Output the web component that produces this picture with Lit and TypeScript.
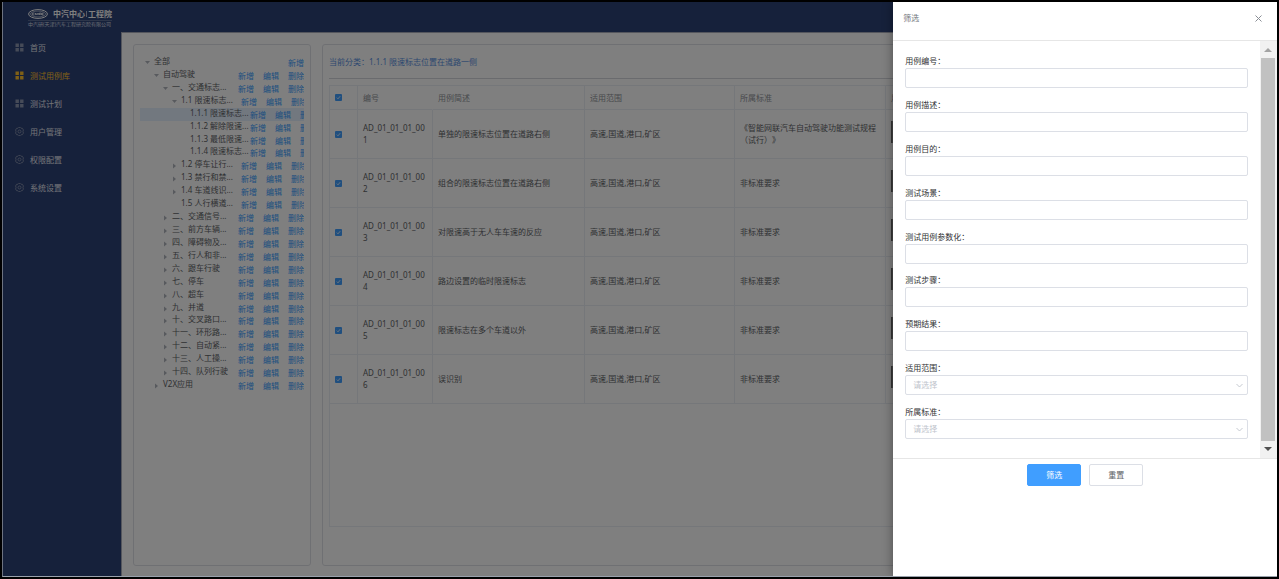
import { LitElement, html, svg, css } from "lit";
import { customElement } from "lit/decorators.js";
import { classMap } from "lit/directives/class-map.js";

type TreeNode = { label: string; depth: number; state: "open" | "closed" | "leaf" };

const n = (depth: number, label: string, state: TreeNode["state"] = "closed"): TreeNode => ({ label, depth, state });

const TREE: TreeNode[] = [
  n(0, "全部", "open"),
  n(1, "自动驾驶", "open"),
  n(2, "一、交通标志...", "open"),
  n(3, "1.1 限速标志...", "open"),
  n(4, "1.1.1 限速标志...", "leaf"),
  n(4, "1.1.2 解除限速...", "leaf"),
  n(4, "1.1.3 最低限速...", "leaf"),
  n(4, "1.1.4 限速标志...", "leaf"),
  n(3, "1.2 停车让行..."),
  n(3, "1.3 禁行和禁..."),
  n(3, "1.4 车道线识..."),
  n(3, "1.5 人行横道...", "leaf"),
  n(2, "二、交通信号..."),
  n(2, "三、前方车辆..."),
  n(2, "四、障碍物及..."),
  n(2, "五、行人和非..."),
  n(2, "六、跟车行驶"),
  n(2, "七、停车"),
  n(2, "八、超车"),
  n(2, "九、并道"),
  n(2, "十、交叉路口..."),
  n(2, "十一、环形路..."),
  n(2, "十二、自动紧..."),
  n(2, "十三、人工操..."),
  n(2, "十四、队列行驶"),
  n(1, "V2X应用"),
];

const CASES = [
  ["AD_01_01_01_001", "单独的限速标志位置在道路右侧", "《智能网联汽车自动驾驶功能测试规程（试行）》"],
  ["AD_01_01_01_002", "组合的限速标志位置在道路右侧", "非标准要求"],
  ["AD_01_01_01_003", "对限速高于无人车车速的反应", "非标准要求"],
  ["AD_01_01_01_004", "路边设置的临时限速标志", "非标准要求"],
  ["AD_01_01_01_005", "限速标志在多个车道以外", "非标准要求"],
  ["AD_01_01_01_006", "误识别", "非标准要求"],
];

const base = css`
  * { box-sizing: border-box; }
  :host {
    box-sizing: border-box;
    font-family: "Noto Sans", "Noto Sans CJK SC", sans-serif;
    font-size: 8px;
    line-height: 12px;
    text-spacing-trim: space-all;
  }
  a { text-decoration: none; }
`;

@customElement("side-menu")
class SideMenu extends LitElement {
  static styles = [base, css`
    :host { display: block; background: #2c4276; padding-top: 2px; }
    .item { display: flex; align-items: center; height: 28px; padding-left: 12px; gap: 6px; color: #e4e7ef; }
    .item svg { width: 9px; height: 9px; color: #8d97b0; margin-bottom: 2px; }
    .active, .active svg { color: #ffc02c; }
  `];

  grid = svg`<path fill="currentColor" d="M0.5 0.5h3.4v3.4h-3.4zM5.1 0.5h3.4v3.4h-3.4zM0.5 5.1h3.4v3.4h-3.4zM5.1 5.1h3.4v3.4h-3.4z"/>`;
  gear = svg`<g fill="none" stroke="currentColor" stroke-width=".8"><path d="M3 1.2 3.6.5h1.8L6 1.2l1.5.2.9 1.6-.4 1.5.4 1.5-.9 1.6L6 7.8l-.6.7H3.6L3 7.8l-1.5-.2L.6 6 1 4.500.6 3l.9-1.600z"/><circle cx="4.500" cy="4.500" r="1.500"/></g>`;

  render() {
    const items: [string, unknown][] = [
      ["首页", this.grid], ["测试用例库", this.grid], ["测试计划", this.grid],
      ["用户管理", this.gear], ["权限配置", this.gear], ["系统设置", this.gear],
    ];
    return html`<nav>${items.map(([text, icon], i) => html`
      <a href="#" class=${classMap({ item: true, active: i === 1 })}>
        <svg viewBox="0 0 9 9" aria-hidden="true">${icon}</svg><span>${text}</span>
      </a>`)}</nav>`;
  }
}

@customElement("case-tree")
class CaseTree extends LitElement {
  static styles = [base, css`
    :host { display: grid; grid-auto-rows: 1fr; height: 347px; padding-top: 11px; overflow: hidden; }
    .row { display: flex; min-width: 0; min-height: 0; height: 100%; color: #606266; }
    .current { background: #e4f0ff; }
    .arrow { flex: none; width: 5px; height: 13px; margin: 0 4px 0 5px; color: #b0b4bd; }
    .d1 { padding-left: 9px; }
    .d2 { padding-left: 18px; }
    .d3 { padding-left: 27px; }
    .d4 { padding-left: 36px; }
    .label { flex: none; min-width: 60px; height: 10px; line-height: 10px; white-space: nowrap; }
    .ops { flex: none; display: flex; gap: 9px; height: 12px; margin-left: auto; line-height: 13px; }
    .ops a { color: #409eff; }
  `];

  render() {
    return TREE.map((t, i) => html`
      <div class=${classMap({ row: true, current: i === 4, [`d${t.depth}`]: true })}>
        <svg class="arrow" viewBox="0 0 5 13" aria-hidden="true">
          ${t.state === "open" ? svg`<path fill="currentColor" d="M0 5h5L2.500 8z"/>`
            : t.state === "closed" ? svg`<path fill="currentColor" d="M1 4.500 4 7 1 9.500z"/>` : ""}
        </svg>
        <span class="label">${t.label}</span>
        <span class="ops">
          <a href="#">新增</a>
          ${t.depth > 0 ? html`<a href="#">编辑</a><a href="#">删除</a>` : ""}
        </span>
      </div>`);
  }
}

@customElement("case-table")
class CaseTable extends LitElement {
  static styles = [base, css`
    :host { display: block; overflow: hidden; border: 1px solid #ebeef5; }
    table { width: 100%; table-layout: fixed; border-collapse: separate; border-spacing: 0; color: #606266; }
    th, td {
      padding: 0 5px; text-align: left; vertical-align: middle; font-weight: 400; word-break: break-all;
      border-right: 1px solid #ebeef5; border-bottom: 1px solid #ebeef5;
    }
    th { height: 24px; color: #909399; }
    td { height: 49px; }
    .open { border-right-color: transparent; }
    .c0 { width: 28px; } .c1 { width: 75px; } .c2 { width: 152px; }
    .c3 { width: 150px; } .c4 { width: 151px; }
    input {
      appearance: none; display: block; width: 7px; height: 7px; margin: 0; border-radius: 1px;
      background: #409eff url("data:image/svg+xml,%3Csvg xmlns='http://www.w3.org/2000/svg' viewBox='0 0 7 7'%3E%3Cpath d='M1.8 3.600 3 4.800 5.200 2.200' fill='none' stroke='white' stroke-width='.8'/%3E%3C/svg%3E");
    }
    .thumb { display: block; width: 40px; height: 22px; margin-bottom: 4px; background: #8a8a8a; border-left: 1px solid #6b6b6b; }
  `];

  render() {
    return html`<table>
      <thead><tr>
        <th class="c0"><input type="checkbox" checked aria-label="全选"></th>
        <th class="c1 open">编号</th><th class="c2">用例简述</th><th class="c3">适用范围</th>
        <th class="c4">所属标准</th><th>用例图</th>
      </tr></thead>
      <tbody>${CASES.map(([id, text, standard]) => html`<tr>
        <td><input type="checkbox" checked aria-label=${id}></td>
        <td>${id}</td><td>${text}</td><td>高速,国道,港口,矿区</td><td>${standard}</td>
        <td><span class="thumb"></span></td>
      </tr>`)}</tbody>
    </table>`;
  }
}

@customElement("filter-drawer")
class FilterDrawer extends LitElement {
  static styles = [base, css`
    :host { display: flex; flex-direction: column; background: #fff; color: #303133; box-shadow: 0 0 10px rgba(0, 0, 0, .4); }
    header { display: flex; justify-content: space-between; align-items: center; height: 39px; padding: 0 14px 6px 10px; color: #72767b; border-bottom: 1px solid #e6e6e6; }
    h2 { margin: 0; font-size: 8px; font-weight: 400; }
    .close { display: block; width: 9px; height: 9px; padding: 0; border: 0; background: none; color: #8a8e95; }
    .close svg { display: block; }
    .body { display: flex; height: 418px; border-bottom: 1px solid #e6e6e6; }
    form { flex: 1; display: flex; flex-direction: column; justify-content: space-between; padding: 13px 12px 19px 12px; }
    label { display: block; height: 14px; line-height: 14px; }
    input, select {
      display: block; width: 100%; height: 20px; padding: 0 8px; font: inherit; color: #c0c4cc;
      background: #fff; border: 1px solid #dcdfe6; border-radius: 2px; outline: none;
    }
    select {
      appearance: none; padding: 0 7px;
      background: #fff url("data:image/svg+xml,%3Csvg xmlns='http://www.w3.org/2000/svg' width='7' height='5' viewBox='0 0 7 5'%3E%3Cpath d='M.5 1 3.500 4 6.500 1' fill='none' stroke='%23c0c4cc' stroke-width='.9'/%3E%3C/svg%3E") no-repeat right 4px center;
    }
    .scroll { display: flex; flex-direction: column; width: 17px; padding: 0 2px 0 1px; background: #f1f1f1; }
    .scroll svg { flex: none; display: block; width: 14px; height: 17px; }
    .thumb { flex: 1; background: #c1c1c1; }
    footer { display: flex; justify-content: center; gap: 8px; padding-top: 5px; }
    .btn { width: 54px; height: 22px; padding: 0; font: inherit; color: #606266; background: #fff; border: 1px solid #dcdfe6; border-radius: 2px; }
    .primary { color: #fff; background: #409eff; border-color: #409eff; }
  `];

  render() {
    const inputs = ["用例编号", "用例描述", "用例目的", "测试场景", "测试用例参数化", "测试步骤", "预期结果"];
    const selects = ["适用范围", "所属标准"];
    return html`
      <header>
        <h2>筛选</h2>
        <button class="close" aria-label="关闭"><svg viewBox="0 0 9 9"><path d="M1.500 1.500l6 6M7.500 1.500l-6 6" stroke="currentColor" fill="none"/></svg></button>
      </header>
      <div class="body">
        <form>
          ${inputs.map((t, i) => html`<div><label for="i${i}">${t}：</label><input id="i${i}" type="text"></div>`)}
          ${selects.map((t, i) => html`<div><label for="s${i}">${t}：</label><select id="s${i}"><option>请选择</option></select></div>`)}
        </form>
        <div class="scroll" aria-hidden="true">
          <svg viewBox="0 0 14 17"><path fill="#a3a3a3" d="M3 11h8L7 7z"/></svg>
          <div class="thumb"></div>
          <svg viewBox="0 0 14 17"><path fill="#505050" d="M3 6h8L7 10z"/></svg>
        </div>
      </div>
      <footer>
        <button class="btn primary">筛选</button>
        <button class="btn">重置</button>
      </footer>`;
  }
}

@customElement("app-root")
class AppRoot extends LitElement {
  static styles = [base, css`
    :host { display: block; height: 100vh; border: 2px solid #000; background: #fff; }
    .app { position: relative; display: flex; flex-direction: column; height: 100%; overflow: hidden; border-left: 1px solid #6d7380; border-bottom: 1px solid #9aa2ac; }
    .top { flex: none; height: 30px; padding: 6px 0 0 25px; background: #2c4276; color: #fff; }
    .brand { display: flex; align-items: center; gap: 5px; height: 11px; font-weight: 600; line-height: 11px; }
    .brand svg { width: 20px; height: 10px; }
    .sep { width: 1px; height: 6px; margin: 0 -4px; background: #aab2c8; }
    .company { width: 84px; margin-top: 1px; border-top: 1px solid #5b6c95; font-size: 5px; line-height: 6px; color: #d5d9e4; white-space: nowrap; }
    .main { flex: 1; display: flex; min-height: 0; }
    side-menu { flex: none; width: 118px; }
    .content { flex: 1; min-width: 0; display: flex; gap: 11px; padding: 11px 11px 10px; border-top: 1px solid #a9adba; border-left: 1px solid #a9adba; }
    .panel { border: 1px solid #dfe1e6; border-radius: 3px; }
    .left { flex: none; width: 178px; padding: 0 6px; }
    .right { flex: 1; min-width: 0; display: flex; flex-direction: column; padding: 0 6px 38px; }
    .crumb { flex: none; line-height: 33px; color: #5a8fe0; border-bottom: 1px solid #d5d7dc; }
    case-table { flex: 1; margin-top: 6px; }
    .mask { position: absolute; inset: 0; background: rgba(0, 0, 0, .5); }
    filter-drawer { position: absolute; top: 0; right: 0; bottom: 0; width: 30vw; }
  `];

  render() {
    return html`<div class="app">
      <header class="top">
        <div class="brand">
          <svg viewBox="0 0 20 10" fill="none" stroke="#fff" aria-hidden="true">
            <ellipse cx="10" cy="5" rx="9.400" ry="4.400"/>
            <ellipse cx="10" cy="5" rx="7.600" ry="2.900" stroke-width=".5"/>
            <path stroke-width=".8" d="M6.500 4.100H4.300v1.800h2.200M7.600 6V4l1.300 1.800L10.200 4v2M11.400 6V4.100h2V6M11.400 5.200h2M15.800 4.100h-1.500V6h1.500"/>
          </svg>
          <span>中汽中心</span><i class="sep"></i><span>工程院</span>
        </div>
        <div class="company">中汽研(天津)汽车工程研究院有限公司</div>
      </header>
      <div class="main">
        <side-menu></side-menu>
        <div class="content">
          <section class="panel left"><case-tree></case-tree></section>
          <section class="panel right">
            <div class="crumb">当前分类：1.1.1 限速标志位置在道路一侧</div>
            <case-table></case-table>
          </section>
        </div>
      </div>
      <div class="mask"></div>
      <filter-drawer></filter-drawer>
    </div>`;
  }
}
